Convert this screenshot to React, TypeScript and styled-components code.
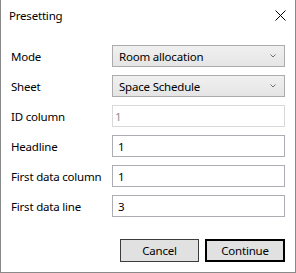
import React from "react";
import styled, { createGlobalStyle } from "styled-components";

const Global = createGlobalStyle`
  html, body { margin: 0; padding: 0; background: #fff; }
  * { box-sizing: border-box; }
`;

const Dialog = styled.div`
  width: 296px;
  height: 273px;
  background: #fff;
  border: 1px solid #8a8a8a;
  border-top: none;
  display: flex;
  flex-direction: column;
  font-family: "Segoe UI", "Noto Sans", sans-serif;
  font-size: 11.5px;
  letter-spacing: -0.2px;
  color: #000;
`;

const TitleBar = styled.div`
  height: 31px;
  display: flex;
  align-items: center;
  justify-content: space-between;
  padding: 0 9px 0 8px;
`;

const Title = styled.span`
  font-size: 11.5px;
`;

const CloseButton = styled.button`
  width: 12px;
  height: 12px;
  padding: 0;
  border: none;
  background: transparent;
  display: flex;
  align-items: center;
  justify-content: center;
`;

const Form = styled.div`
  display: grid;
  grid-template-columns: 101px 173px;
  grid-auto-rows: 22px;
  row-gap: 8px;
  padding: 14px 10px 0 10px;
`;

const Label = styled.label`
  display: flex;
  align-items: center;
  white-space: nowrap;
`;

const Combo = styled.div`
  display: flex;
  align-items: center;
  justify-content: space-between;
  border: 1px solid #acacac;
  background: linear-gradient(#f0f0f0, #e5e5e5);
  padding: 0 8px 0 6px;
`;

const Field = styled.div<{ $disabled?: boolean }>`
  display: flex;
  align-items: center;
  border: 1px solid ${(p) => (p.$disabled ? "#d9d9d9" : "#abadb3")};
  background: #fff;
  color: ${(p) => (p.$disabled ? "#8f8f8f" : "#000")};
  padding-left: ${(p) => (p.$disabled ? "2px" : "5px")};
`;

const Footer = styled.div`
  margin-top: auto;
  display: flex;
  justify-content: flex-end;
  gap: 6px;
  padding: 0 10px 10px 0;
`;

const Button = styled.button<{ $default?: boolean }>`
  width: ${(p) => (p.$default ? "80px" : "79px")};
  height: 23px;
  font-family: inherit;
  font-size: 11.5px;
  letter-spacing: -0.2px;
  color: #000;
  background: #e1e1e1;
  border: ${(p) => (p.$default ? "2px solid #000" : "1px solid #3c3c3c")};
  padding: 0;
`;

const Chevron = () => (
  <svg width="6" height="4" viewBox="0 0 6 4">
    <path d="M0.5 0.5 L3 3 L5.5 0.5" fill="none" stroke="#707070" strokeWidth="1" />
  </svg>
);

export default function App() {
  return (
    <>
      <Global />
      <Dialog>
        <TitleBar>
          <Title>Presetting</Title>
          <CloseButton aria-label="Close">
            <svg width="11" height="11" viewBox="0 0 11 11">
              <path d="M0.5 0.5 L10.5 10.5 M10.5 0.5 L0.5 10.5" stroke="#000" strokeWidth="1" />
            </svg>
          </CloseButton>
        </TitleBar>
        <Form>
          <Label>Mode</Label>
          <Combo>
            <span>Room allocation</span>
            <Chevron />
          </Combo>
          <Label>Sheet</Label>
          <Combo>
            <span>Space Schedule</span>
            <Chevron />
          </Combo>
          <Label>ID column</Label>
          <Field $disabled>1</Field>
          <Label>Headline</Label>
          <Field>1</Field>
          <Label>First data column</Label>
          <Field>1</Field>
          <Label>First data line</Label>
          <Field>3</Field>
        </Form>
        <Footer>
          <Button>Cancel</Button>
          <Button $default>Continue</Button>
        </Footer>
      </Dialog>
    </>
  );
}
